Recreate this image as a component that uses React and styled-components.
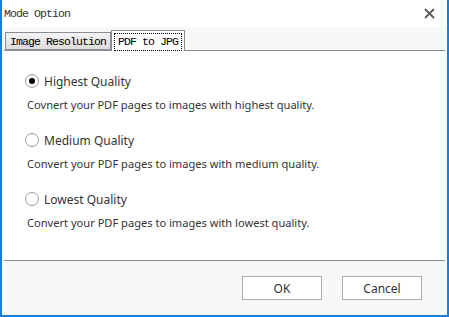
import styled, { createGlobalStyle } from "styled-components";

const GlobalStyle = createGlobalStyle`
  body {
    margin: 0;
    background: #ffffff;
  }
`;

const options = [
  { label: "Highest Quality", text: "Covnert your PDF pages to images with highest quality.", checked: true },
  { label: "Medium Quality", text: "Convert your PDF pages to images with medium quality." },
  { label: "Lowest Quality", text: "Convert your PDF pages to images with lowest quality." },
];

export default function App() {
  return (
    <>
      <GlobalStyle />
      <StyleWindow>
        <StyleTitleBar>
          <span>Mode Option</span>
          <StyleClose>
            <svg width="11" height="11" viewBox="0 0 11 11">
              <path d="M1 1L10 10M10 1L1 10" stroke="#5a5a5a" strokeWidth="1.8" />
            </svg>
          </StyleClose>
        </StyleTitleBar>
        <StyleBody>
          <StyleTabs>
            <StyleTab>Image Resolution</StyleTab>
            <StyleTab active>
              <StyleFocus>PDF to JPG</StyleFocus>
            </StyleTab>
          </StyleTabs>
          <StylePanel>
            {options.map((o) => (
              <StyleGroup key={o.label}>
                <StyleRadioRow>
                  <StyleRadio checked={o.checked} />
                  <span>{o.label}</span>
                </StyleRadioRow>
                <StyleDesc>{o.text}</StyleDesc>
              </StyleGroup>
            ))}
          </StylePanel>
        </StyleBody>
        <StyleFooter>
          <StyleButton>OK</StyleButton>
          <StyleButton>Cancel</StyleButton>
        </StyleFooter>
      </StyleWindow>
    </>
  );
}

const StyleWindow = styled.div`
  width: 449px;
  height: 317px;
  box-sizing: border-box;
  border: 2px solid #1a7fd4;
  border-top: none;
  display: flex;
  flex-direction: column;
  background: #f8f8f8;
`;
const StyleTitleBar = styled.div`
  height: 27px;
  flex-shrink: 0;
  background: #ffffff;
  display: flex;
  align-items: center;
  justify-content: space-between;
  padding: 0 12px 0 2px;
  font-family: "Liberation Mono", monospace;
  font-size: 11.5px;
  letter-spacing: -0.9px;
  color: #333333;
`;
const StyleClose = styled.div`
  width: 11px;
  height: 11px;
  display: flex;
`;
const StyleBody = styled.div`
  padding: 3px 2px 0;
  display: flex;
  flex-direction: column;
`;
const StyleTabs = styled.div`
  display: flex;
  align-items: flex-end;
  padding-left: 1px;
  height: 20px;
`;
const StyleTab = styled.div`
  box-sizing: border-box;
  height: ${(p) => (p.active ? "21px" : "18px")};
  margin-bottom: ${(p) => (p.active ? "-1px" : "0")};
  padding: ${(p) => (p.active ? "2px 2px 0" : "2px 4px 0")};
  border: 1px solid #8c8c96;
  border-bottom: ${(p) => (p.active ? "none" : "1px solid #8c8c96")};
  background: ${(p) => (p.active ? "#ffffff" : "linear-gradient(#f4f4f4, #dcdcdc)")};
  font-family: "Liberation Mono", monospace;
  font-size: 11.5px;
  letter-spacing: -0.9px;
  color: #000000;
  position: relative;
  z-index: ${(p) => (p.active ? 1 : 0)};
`;
const StyleFocus = styled.div`
  border: 1px dotted #000000;
  padding: 1px 3px 2px;
  line-height: 13px;
`;
const StylePanel = styled.div`
  box-sizing: border-box;
  height: 210px;
  background: #ffffff;
  border-top: 1px solid #8c8c96;
  padding: 19px 0 0 18px;
  display: flex;
  flex-direction: column;
  gap: 13px;
  font-family: "Noto Sans", sans-serif;
`;
const StyleGroup = styled.div`
  display: flex;
  flex-direction: column;
`;
const StyleRadioRow = styled.div`
  height: 22px;
  display: flex;
  align-items: center;
  gap: 5px;
  padding-left: 3px;
  font-size: 12px;
  color: #333333;
`;
const StyleRadio = styled.span`
  width: 14px;
  height: 14px;
  box-sizing: border-box;
  border-radius: 50%;
  border: 1px solid #9a9a9a;
  background: #ffffff;
  display: flex;
  align-items: center;
  justify-content: center;
  &::after {
    content: "";
    width: 6px;
    height: 6px;
    border-radius: 50%;
    background: ${(p) => (p.checked ? "#000000" : "transparent")};
  }
`;
const StyleDesc = styled.div`
  height: 24px;
  display: flex;
  align-items: center;
  padding-left: 5px;
  font-size: 11.1px;
  color: #333333;
`;
const StyleFooter = styled.div`
  flex: 1;
  margin: 0 2px;
  border-top: 1px solid #8c8c96;
  display: flex;
  justify-content: flex-end;
  align-items: flex-start;
  gap: 20px;
  padding: 15px 23px 0 0;
`;
const StyleButton = styled.button`
  width: 80px;
  height: 24px;
  background: #ffffff;
  border: 1px solid #adadad;
  font-family: "Noto Sans", sans-serif;
  font-size: 12px;
  color: #333333;
  padding: 0;
`;
